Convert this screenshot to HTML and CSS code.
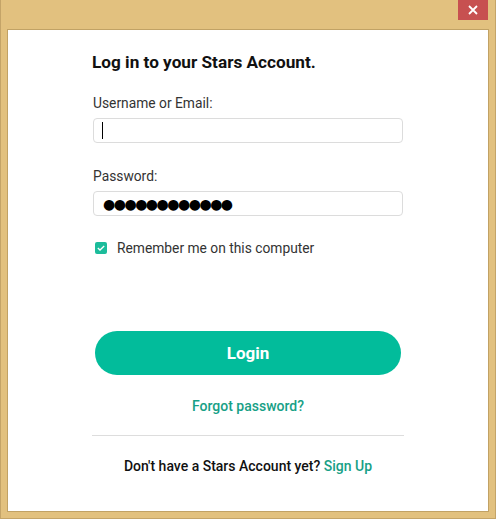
FILE: index.html
```html
<!DOCTYPE html>
<html lang="en">
<head>
    <meta charset="UTF-8">
    <meta name="viewport" content="width=device-width, initial-scale=1.0">
    <title>Stars Account</title>
    <link rel="stylesheet" href="styles.css">
</head>
<body>

<div class="window">
  <div class="titlebar">
    <button class="close" title="Close">
      <svg width="10" height="10" viewBox="0 0 10 10"><path d="M1 1 L9 9 M9 1 L1 9" stroke="#fff" stroke-width="1.8" fill="none"/></svg>
    </button>
  </div>

  <div class="client">
    <form class="login">
      <h1 class="heading">Log in to your Stars Account.</h1>

      <label class="field-label" for="user">Username or Email:</label>
      <div class="input"><span class="caret"></span></div>

      <label class="field-label" for="pass">Password:</label>
      <div class="input dots">●●●●●●●●●●●●</div>

      <div class="remember">
        <span class="check">
          <svg width="8" height="6" viewBox="0 0 8 6"><path d="M0.8 3 L3 5 L7.2 1" stroke="#fff" stroke-width="1.3" fill="none"/></svg>
        </span>
        <span>Remember me on this computer</span>
      </div>

      <button class="btn-login" type="button">Login</button>

      <a class="forgot" href="#">Forgot password?</a>

      <hr class="divider">

      <p class="signup">Don't have a Stars Account yet? <a href="#">Sign Up</a></p>
    </form>
  </div>
</div>

</body>
</html>
```

FILE: styles.css
```css
body {
  margin: 0;
  font-family: Roboto, "Liberation Sans", sans-serif;
  background: #e2c17f;
}

.window {
  height: 519px;
  box-sizing: border-box;
  display: flex;
  flex-direction: column;
  padding: 0 6px 6px 6px;
  border: 1px solid #c4a468;
  border-top: none;
  background: #e2c17f;
}

.titlebar {
  height: 29px;
  display: flex;
  justify-content: flex-end;
  align-items: flex-start;
  margin-right: 1px;
}

.close {
  width: 30px;
  height: 20px;
  border: none;
  padding: 0;
  background: #c75050;
  display: flex;
  align-items: center;
  justify-content: center;
}

.client {
  flex: 1;
  background: #fff;
  border: 1px solid #c1a265;
  display: flex;
  justify-content: center;
}

.login {
  width: 312px;
  display: flex;
  flex-direction: column;
  padding-top: 21px;
}

.heading {
  margin: 0;
  font-size: 17.2px;
  line-height: 22px;
  font-weight: 700;
  color: #111;
}

.field-label {
  margin: 22px 0 0 1px;
  font-size: 13.8px;
  line-height: 16px;
  color: #333;
}

.field-label + .input { margin-top: 7px; }
.input + .field-label { margin-top: 25px; }

.input {
  margin: 0 1px;
  height: 25px;
  box-sizing: border-box;
  border: 1px solid #dcdcdc;
  border-radius: 4px;
  display: flex;
  align-items: center;
  padding-left: 8px;
}

.caret {
  width: 1px;
  height: 17px;
  background: #000;
}

.dots {
  font-family: "DejaVu Sans", sans-serif;
  font-size: 14px;
  letter-spacing: -1.5px;
  color: #000;
  padding-left: 9px;
}

.remember {
  margin: 24px 0 0 3px;
  display: flex;
  align-items: center;
  gap: 10px;
  font-size: 13.8px;
  line-height: 16px;
  color: #333;
}

.check {
  width: 12px;
  height: 12px;
  border-radius: 2px;
  background: #1cbc9b;
  display: flex;
  align-items: center;
  justify-content: center;
}

.btn-login {
  margin: 75px 3px 0 3px;
  height: 44px;
  border: none;
  border-radius: 22px;
  background: #02bc9b;
  color: #fff;
  font-family: inherit;
  font-size: 17px;
  font-weight: 700;
}

.forgot {
  margin-top: 23px;
  align-self: center;
  font-size: 14px;
  line-height: 16px;
  font-weight: 500;
  color: #17a086;
  text-decoration: none;
}

.divider {
  width: 100%;
  margin: 21px 0 0 0;
  border: none;
  border-top: 1px solid #dddddd;
}

.signup {
  margin: 22px 0 0 0;
  text-align: center;
  font-size: 14px;
  line-height: 16px;
  font-weight: 500;
  color: #111;
}

.signup a {
  color: #17a086;
  text-decoration: none;
}
```
